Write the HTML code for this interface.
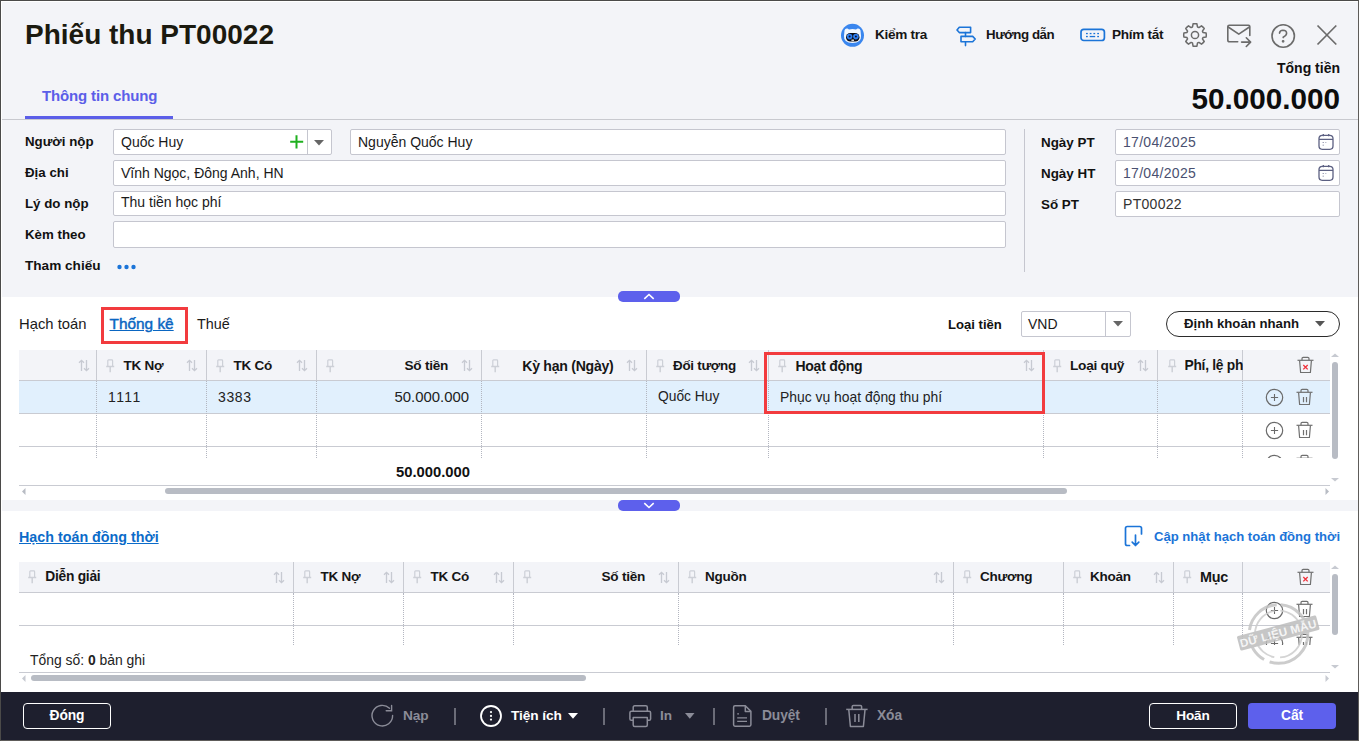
<!DOCTYPE html>
<html><head><meta charset="utf-8">
<style>
*{box-sizing:border-box;margin:0;padding:0}
html,body{width:1359px;height:741px;overflow:hidden}
body{position:relative;background:#f3f4f8;font-family:"Liberation Sans",sans-serif;color:#1a1a1a}
.a{position:absolute}
.frame{left:0;top:0;width:1359px;height:741px;border:1px solid #4b4a49;border-right-color:#5e5c5a;border-bottom-color:#5e5c5a;pointer-events:none;z-index:50}
.hl{left:1px;top:1px;width:1357px;height:1px;background:#fff;z-index:49}
.vl{left:1px;top:1px;width:1px;height:690px;background:#fff;z-index:49}
.lbl{font-weight:bold;font-size:13.3px;color:#111}
.inp{background:#fff;border:1px solid #c5c6cf;border-radius:2px;height:26px}
.itxt{font-size:14px;color:#1a1a1a}
.th{background:#f3f4f8}
.bold{font-weight:bold}
</style></head><body>
<div class="a frame"></div><div class="a hl"></div><div class="a vl"></div>

<!-- header -->
<div class="a bold" style="left:25px;top:19px;font-size:28px;color:#1b1a10;line-height:32px">Phiếu thu PT00022</div>
<div class="a bold" style="left:42px;top:86.5px;font-size:15px;letter-spacing:-0.15px;color:#5b5ee8;line-height:18px">Thông tin chung</div>
<div class="a" style="left:25px;top:116px;width:148px;height:3px;background:#5b5ee8"></div>
<div class="a" style="left:1px;top:119px;width:1357px;height:1px;background:#c8c9cf"></div>


<!-- header tools -->
<svg class="a" style="left:838px;top:21px" width="30" height="30" viewBox="0 0 30 30">
 <circle cx="14.5" cy="14.3" r="11.5" fill="#3a86ee"/>
 <path d="M6.5 9.5 Q7 7.2 9.5 7.6 L11 8.6 Q14.5 7.6 18 8.6 L19.5 7.6 Q22 7.2 22.5 9.5 L23 15 Q23.5 21.8 14.5 22 Q5.5 21.8 6 15 Z" fill="#f3f8ff"/>
 <rect x="8" y="12" width="13.5" height="8.6" rx="4.3" fill="#0d0d14"/>
 <circle cx="11.6" cy="15.6" r="2.8" fill="#2f7ff0"/><circle cx="17.9" cy="15.6" r="2.8" fill="#2f7ff0"/>
 <circle cx="11.6" cy="15.6" r="1" fill="#0d1030"/><circle cx="17.9" cy="15.6" r="1" fill="#0d1030"/>
 <rect x="13.4" y="18.6" width="2.6" height="1.2" fill="#fff"/>
</svg>
<div class="a bold" style="left:875px;top:27px;font-size:13.6px;letter-spacing:-0.3px;line-height:15px;color:#161616">Kiểm tra</div>
<svg class="a" style="left:950px;top:20px" width="32" height="32" viewBox="0 0 32 32" fill="none" stroke="#1b74d8" stroke-width="1.6" stroke-linejoin="round">
 <path d="M9.3 7.2 H20.6 V12.6 H9.3 L7 9.9 Z"/>
 <path d="M11 16.4 H22.7 L25.2 19 L22.7 21.7 H11 Z"/>
 <path d="M15.5 12.6 V16.4 M15.5 21.7 V25.6" stroke-linecap="round"/>
</svg>
<div class="a bold" style="left:986px;top:27px;font-size:13.3px;letter-spacing:-0.45px;line-height:15px;color:#161616">Hướng dẫn</div>
<svg class="a" style="left:1076px;top:20px" width="34" height="30" viewBox="0 0 34 30" fill="none">
 <rect x="5" y="9.3" width="23.4" height="11.2" rx="2.8" stroke="#1b74d8" stroke-width="1.7"/>
 <g fill="#1b74d8"><rect x="10" y="12.9" width="1.8" height="1.3"/><rect x="13.7" y="12.9" width="1.8" height="1.3"/><rect x="17.4" y="12.9" width="1.8" height="1.3"/><rect x="21.2" y="12.9" width="1.8" height="1.3"/>
 <rect x="10" y="15.9" width="1.8" height="1.3"/><rect x="13.7" y="15.9" width="5.5" height="1.3"/><rect x="21.2" y="15.9" width="1.8" height="1.3"/></g>
</svg>
<div class="a bold" style="left:1112px;top:27px;font-size:13.6px;letter-spacing:-0.3px;line-height:15px;color:#161616">Phím tắt</div>
<svg class="a" style="left:1178px;top:18px" width="34" height="34" viewBox="0 0 34 34" fill="none" stroke="#6b6b6b" stroke-width="1.5" stroke-linejoin="round">
 <path d="M14.52 8.98 L15.09 5.86 A11.3 11.3 0 0 1 18.91 5.86 L19.48 8.98 A8.4 8.4 0 0 1 20.92 9.57 L23.52 7.77 A11.3 11.3 0 0 1 26.23 10.48 L24.43 13.08 A8.4 8.4 0 0 1 25.02 14.52 L28.14 15.09 A11.3 11.3 0 0 1 28.14 18.91 L25.02 19.48 A8.4 8.4 0 0 1 24.43 20.92 L26.23 23.52 A11.3 11.3 0 0 1 23.52 26.23 L20.92 24.43 A8.4 8.4 0 0 1 19.48 25.02 L18.91 28.14 A11.3 11.3 0 0 1 15.09 28.14 L14.52 25.02 A8.4 8.4 0 0 1 13.08 24.43 L10.48 26.23 A11.3 11.3 0 0 1 7.77 23.52 L9.57 20.92 A8.4 8.4 0 0 1 8.98 19.48 L5.86 18.91 A11.3 11.3 0 0 1 5.86 15.09 L8.98 14.52 A8.4 8.4 0 0 1 9.57 13.08 L7.77 10.48 A11.3 11.3 0 0 1 10.48 7.77 L13.08 9.57 A8.4 8.4 0 0 1 14.52 8.98 Z"/>
 <circle cx="17" cy="17" r="3.6"/>
</svg>
<svg class="a" style="left:1222px;top:18px" width="34" height="34" viewBox="0 0 34 34" fill="none" stroke="#6b6b6b" stroke-width="1.6" stroke-linecap="round" stroke-linejoin="round">
 <path d="M15.7 23.8 H7.5 Q5.8 23.8 5.8 22 V8.7 Q5.8 7.3 7.3 7.3 H26.6 Q27.8 7.3 27.8 8.7 V17.5"/>
 <path d="M6.2 9 L16.8 16.2 L27.4 9"/>
 <path d="M19.6 24.1 H28.6 M24.3 19.8 L28.6 24.1 L24.3 28.5"/>
</svg>
<svg class="a" style="left:1266px;top:18px" width="34" height="34" viewBox="0 0 34 34" fill="none" stroke="#6b6b6b" stroke-width="1.6" stroke-linecap="round">
 <circle cx="17.2" cy="18" r="11.2"/>
 <path d="M13.5 15.2 Q13.8 12.2 16.9 12.2 Q20.6 12.3 20.6 15.3 Q20.6 17.5 17.2 19.2 V19.6"/>
 <circle cx="17.1" cy="23.3" r="0.6" fill="#6b6b6b"/>
</svg>
<svg class="a" style="left:1312px;top:20px" width="30" height="30" viewBox="0 0 30 30" fill="none" stroke="#6b6b6b" stroke-width="1.7">
 <path d="M5.5 5.5 L24.3 24.5 M24.3 5.5 L5.5 24.5"/>
</svg>
<div class="a bold" style="left:1277px;top:60px;font-size:14px;line-height:16px;color:#111;">Tổng tiền</div>
<div class="a bold" style="right:19px;top:84px;font-size:29.7px;line-height:30px;color:#0d0d0d">50.000.000</div>


<!-- form -->
<div class="a lbl" style="left:25px;top:134px">Người nộp</div>
<div class="a lbl" style="left:25px;top:165px">Địa chi</div>
<div class="a lbl" style="left:25px;top:196px">Lý do nộp</div>
<div class="a lbl" style="left:25px;top:227px">Kèm theo</div>
<div class="a lbl" style="left:25px;top:258px;font-size:13.6px">Tham chiếu</div>
<div class="a inp" style="left:113px;top:129px;width:219px"></div>
<div class="a" style="left:307px;top:130px;width:1px;height:24px;background:#c5c6cf"></div>
<svg class="a" style="left:288px;top:133px" width="17" height="17" viewBox="0 0 17 17"><path d="M8.5 2.2 V15.4 M2.2 8.8 H15.2" stroke="#1fb01f" stroke-width="2" fill="none"/></svg>
<svg class="a" style="left:313px;top:139px" width="12" height="8" viewBox="0 0 12 8"><path d="M1 1 H11 L6 6.5 Z" fill="#666"/></svg>
<div class="a itxt" style="left:121px;top:134px;line-height:16px">Quốc Huy</div>
<div class="a inp" style="left:350px;top:129px;width:656px"></div>
<div class="a itxt" style="left:358px;top:134px;line-height:16px">Nguyễn Quốc Huy</div>
<div class="a inp" style="left:113px;top:160px;width:893px"></div>
<div class="a itxt" style="left:121px;top:165px;line-height:16px">Vĩnh Ngọc, Đông Anh, HN</div>
<div class="a inp" style="left:113px;top:191px;width:893px;height:25px"></div>
<div class="a itxt" style="left:121px;top:194px;line-height:16px">Thu tiền học phí</div>
<div class="a inp" style="left:113px;top:221px;width:893px;height:27px"></div>
<svg class="a" style="left:116px;top:262px" width="22" height="10" viewBox="0 0 22 10"><g fill="#1b74d8"><circle cx="3.5" cy="5" r="2.2"/><circle cx="10.5" cy="5" r="2.2"/><circle cx="17.5" cy="5" r="2.2"/></g></svg>

<div class="a" style="left:1024px;top:129px;width:1px;height:143px;background:#c5c6cf"></div>
<div class="a lbl" style="left:1041px;top:135px;font-size:13.4px">Ngày PT</div>
<div class="a lbl" style="left:1041px;top:166px;font-size:13.4px">Ngày HT</div>
<div class="a lbl" style="left:1041px;top:197px;font-size:13.4px">Số PT</div>
<div class="a inp" style="left:1115px;top:129px;width:225px"></div>
<div class="a inp" style="left:1115px;top:160px;width:225px"></div>
<div class="a inp" style="left:1115px;top:191px;width:225px"></div>
<div class="a" style="left:1123px;top:134px;font-size:14px;line-height:16px;color:#4a5070;letter-spacing:0.3px">17/04/2025</div>
<div class="a" style="left:1123px;top:165px;font-size:14px;line-height:16px;color:#4a5070;letter-spacing:0.3px">17/04/2025</div>
<div class="a" style="left:1123px;top:196px;font-size:14px;line-height:16px;color:#333;letter-spacing:0.3px">PT00022</div>
<svg class="a" style="left:1316px;top:132px" width="20" height="20" viewBox="0 0 20 20" fill="none" stroke="#5c6082" stroke-width="1.3"><rect x="3" y="3.3" width="14" height="14" rx="3.2"/><path d="M3 7.3 H17 M7.3 2 V4.3 M12.7 2 V4.3"/><path d="M7.2 10.2 V10.9 M7.2 12.8 V13.4 M9.8 10.2 V10.8" stroke-width="1.1"/></svg>
<svg class="a" style="left:1316px;top:163px" width="20" height="20" viewBox="0 0 20 20" fill="none" stroke="#5c6082" stroke-width="1.3"><rect x="3" y="3.3" width="14" height="14" rx="3.2"/><path d="M3 7.3 H17 M7.3 2 V4.3 M12.7 2 V4.3"/><path d="M7.2 10.2 V10.9 M7.2 12.8 V13.4 M9.8 10.2 V10.8" stroke-width="1.1"/></svg>

<!-- collapse btn -->
<div class="a" style="left:618px;top:291px;width:62px;height:11px;border-radius:5px;background:#5d60ec;z-index:5"></div>
<svg class="a" style="left:643px;top:291px;z-index:6" width="12" height="11" viewBox="0 0 12 11"><path d="M1.3 7.8 L6 3.5 L10.7 7.8" stroke="#fff" stroke-width="1.6" fill="none"/></svg>

<!-- white panels -->
<div class="a" style="left:1px;top:297px;width:1357px;height:203px;background:#fff"></div>
<div class="a" style="left:1px;top:511px;width:1357px;height:181px;background:#fff"></div>
<!-- SEC1 -->
<div class="a" style="left:19px;top:316px;font-size:14.8px;line-height:17px;color:#1a1a1a">Hạch toán</div>
<div class="a" style="left:109.5px;top:315px;font-size:15.4px;line-height:17px;color:#0a66c2;text-decoration:underline;text-underline-offset:1px;-webkit-text-stroke:0.45px #0a66c2">Thống kê</div>
<div class="a" style="left:197px;top:316px;font-size:14.4px;line-height:17px;color:#1a1a1a">Thuế</div>
<div class="a" style="left:101px;top:307px;width:87px;height:37px;border:3px solid #f23b3e"></div>
<div class="a lbl" style="left:948px;top:317px;font-size:13.1px">Loại tiền</div>
<div class="a inp" style="left:1021px;top:311px;width:110px;height:26px"></div>
<div class="a" style="left:1105px;top:312px;width:1px;height:24px;background:#c5c6cf"></div>
<div class="a itxt" style="left:1028px;top:316px;line-height:16px">VND</div>
<svg class="a" style="left:1112px;top:320px" width="12" height="8" viewBox="0 0 12 8"><path d="M1 1 H11 L6 6.5 Z" fill="#666"/></svg>
<div class="a" style="left:1166px;top:311px;width:174px;height:26px;border:1px solid #2b2b2b;border-radius:13px;background:#fff"></div>
<div class="a bold" style="left:1184px;top:316px;font-size:13.2px;line-height:16px;color:#161616">Định khoản nhanh</div>
<svg class="a" style="left:1314px;top:320px" width="12" height="8" viewBox="0 0 12 8"><path d="M1 1 H11 L6 6.5 Z" fill="#555"/></svg>
<div class="a" style="left:19px;top:350px;width:1311px;height:30px;background:#f3f4f8"></div>
<div class="a" style="left:19px;top:380px;width:1311px;height:1px;background:#c9cbd2"></div>
<div class="a" style="left:19px;top:381px;width:1311px;height:32px;background:#e1f0fd"></div>
<div class="a" style="left:19px;top:413px;width:1311px;height:1px;background:#c9cbd2"></div>
<div class="a" style="left:19px;top:446px;width:1311px;height:1px;background:#c9cbd2"></div>
<div class="a" style="left:96px;top:350px;width:1px;height:30px;background:#c9cbd2"></div>
<div class="a" style="left:96px;top:381px;width:1px;height:77px;border-left:1px dotted #b3b6c0"></div>
<div class="a" style="left:206px;top:350px;width:1px;height:30px;background:#c9cbd2"></div>
<div class="a" style="left:206px;top:381px;width:1px;height:77px;border-left:1px dotted #b3b6c0"></div>
<div class="a" style="left:316px;top:350px;width:1px;height:30px;background:#c9cbd2"></div>
<div class="a" style="left:316px;top:381px;width:1px;height:77px;border-left:1px dotted #b3b6c0"></div>
<div class="a" style="left:481px;top:350px;width:1px;height:30px;background:#c9cbd2"></div>
<div class="a" style="left:481px;top:381px;width:1px;height:77px;border-left:1px dotted #b3b6c0"></div>
<div class="a" style="left:646px;top:350px;width:1px;height:30px;background:#c9cbd2"></div>
<div class="a" style="left:646px;top:381px;width:1px;height:77px;border-left:1px dotted #b3b6c0"></div>
<div class="a" style="left:768px;top:350px;width:1px;height:30px;background:#c9cbd2"></div>
<div class="a" style="left:768px;top:381px;width:1px;height:77px;border-left:1px dotted #b3b6c0"></div>
<div class="a" style="left:1043px;top:350px;width:1px;height:30px;background:#c9cbd2"></div>
<div class="a" style="left:1043px;top:381px;width:1px;height:77px;border-left:1px dotted #b3b6c0"></div>
<div class="a" style="left:1157px;top:350px;width:1px;height:30px;background:#c9cbd2"></div>
<div class="a" style="left:1157px;top:381px;width:1px;height:77px;border-left:1px dotted #b3b6c0"></div>
<div class="a" style="left:1242px;top:350px;width:1px;height:30px;background:#c9cbd2"></div>
<div class="a" style="left:1242px;top:381px;width:1px;height:77px;border-left:1px dotted #b3b6c0"></div>
<svg class="a" style="left:78px;top:359px" width="12" height="13" viewBox="0 0 12 13" fill="none" stroke="#c7cad2" stroke-width="1.3"><path d="M3.5 12 V1.3 M1 3.8 L3.5 1.3 L6 3.8 M8.5 1 V11.7 M6 9.2 L8.5 11.7 L11 9.2"/></svg>
<svg class="a" style="left:106px;top:359px" width="10" height="14" viewBox="0 0 10 14" fill="none" stroke="#cdd0d7" stroke-width="1.2"><path d="M1.8 7.6 V1.7 Q1.8 0.9 2.6 0.9 H5.8 Q6.6 0.9 6.6 1.7 V7.6"/><path d="M0.2 7.6 H8.2 M4.2 7.6 V13.2" stroke-width="1.5"/></svg>
<div class="a bold" style="left:123.5px;top:358px;font-size:13.5px;letter-spacing:-0.27px;line-height:16px;color:#161616;">TK Nợ</div>
<svg class="a" style="left:186px;top:359px" width="12" height="13" viewBox="0 0 12 13" fill="none" stroke="#c7cad2" stroke-width="1.3"><path d="M3.5 12 V1.3 M1 3.8 L3.5 1.3 L6 3.8 M8.5 1 V11.7 M6 9.2 L8.5 11.7 L11 9.2"/></svg>
<svg class="a" style="left:216px;top:359px" width="10" height="14" viewBox="0 0 10 14" fill="none" stroke="#cdd0d7" stroke-width="1.2"><path d="M1.8 7.6 V1.7 Q1.8 0.9 2.6 0.9 H5.8 Q6.6 0.9 6.6 1.7 V7.6"/><path d="M0.2 7.6 H8.2 M4.2 7.6 V13.2" stroke-width="1.5"/></svg>
<div class="a bold" style="left:233.5px;top:358px;font-size:13.5px;letter-spacing:-0.27px;line-height:16px;color:#161616;">TK Có</div>
<svg class="a" style="left:296px;top:359px" width="12" height="13" viewBox="0 0 12 13" fill="none" stroke="#c7cad2" stroke-width="1.3"><path d="M3.5 12 V1.3 M1 3.8 L3.5 1.3 L6 3.8 M8.5 1 V11.7 M6 9.2 L8.5 11.7 L11 9.2"/></svg>
<svg class="a" style="left:326px;top:359px" width="10" height="14" viewBox="0 0 10 14" fill="none" stroke="#cdd0d7" stroke-width="1.2"><path d="M1.8 7.6 V1.7 Q1.8 0.9 2.6 0.9 H5.8 Q6.6 0.9 6.6 1.7 V7.6"/><path d="M0.2 7.6 H8.2 M4.2 7.6 V13.2" stroke-width="1.5"/></svg>
<div class="a bold" style="left:248px;width:200px;text-align:right;top:358px;font-size:13.6px;letter-spacing:-0.27px;line-height:16px;color:#161616">Số tiền</div>
<svg class="a" style="left:461px;top:359px" width="12" height="13" viewBox="0 0 12 13" fill="none" stroke="#c7cad2" stroke-width="1.3"><path d="M3.5 12 V1.3 M1 3.8 L3.5 1.3 L6 3.8 M8.5 1 V11.7 M6 9.2 L8.5 11.7 L11 9.2"/></svg>
<svg class="a" style="left:491px;top:359px" width="10" height="14" viewBox="0 0 10 14" fill="none" stroke="#cdd0d7" stroke-width="1.2"><path d="M1.8 7.6 V1.7 Q1.8 0.9 2.6 0.9 H5.8 Q6.6 0.9 6.6 1.7 V7.6"/><path d="M0.2 7.6 H8.2 M4.2 7.6 V13.2" stroke-width="1.5"/></svg>
<div class="a bold" style="left:413.5px;width:200px;text-align:right;top:358px;font-size:14.1px;letter-spacing:-0.27px;line-height:16px;color:#161616">Kỳ hạn (Ngày)</div>
<svg class="a" style="left:626px;top:359px" width="12" height="13" viewBox="0 0 12 13" fill="none" stroke="#c7cad2" stroke-width="1.3"><path d="M3.5 12 V1.3 M1 3.8 L3.5 1.3 L6 3.8 M8.5 1 V11.7 M6 9.2 L8.5 11.7 L11 9.2"/></svg>
<svg class="a" style="left:656px;top:359px" width="10" height="14" viewBox="0 0 10 14" fill="none" stroke="#cdd0d7" stroke-width="1.2"><path d="M1.8 7.6 V1.7 Q1.8 0.9 2.6 0.9 H5.8 Q6.6 0.9 6.6 1.7 V7.6"/><path d="M0.2 7.6 H8.2 M4.2 7.6 V13.2" stroke-width="1.5"/></svg>
<div class="a bold" style="left:673px;top:358px;font-size:13.4px;letter-spacing:-0.27px;line-height:16px;color:#161616;">Đối tượng</div>
<svg class="a" style="left:748px;top:359px" width="12" height="13" viewBox="0 0 12 13" fill="none" stroke="#c7cad2" stroke-width="1.3"><path d="M3.5 12 V1.3 M1 3.8 L3.5 1.3 L6 3.8 M8.5 1 V11.7 M6 9.2 L8.5 11.7 L11 9.2"/></svg>
<svg class="a" style="left:778px;top:359px" width="10" height="14" viewBox="0 0 10 14" fill="none" stroke="#cdd0d7" stroke-width="1.2"><path d="M1.8 7.6 V1.7 Q1.8 0.9 2.6 0.9 H5.8 Q6.6 0.9 6.6 1.7 V7.6"/><path d="M0.2 7.6 H8.2 M4.2 7.6 V13.2" stroke-width="1.5"/></svg>
<div class="a bold" style="left:795.5px;top:358px;font-size:14.0px;letter-spacing:-0.27px;line-height:16px;color:#161616;">Hoạt động</div>
<svg class="a" style="left:1023px;top:359px" width="12" height="13" viewBox="0 0 12 13" fill="none" stroke="#c7cad2" stroke-width="1.3"><path d="M3.5 12 V1.3 M1 3.8 L3.5 1.3 L6 3.8 M8.5 1 V11.7 M6 9.2 L8.5 11.7 L11 9.2"/></svg>
<svg class="a" style="left:1053px;top:359px" width="10" height="14" viewBox="0 0 10 14" fill="none" stroke="#cdd0d7" stroke-width="1.2"><path d="M1.8 7.6 V1.7 Q1.8 0.9 2.6 0.9 H5.8 Q6.6 0.9 6.6 1.7 V7.6"/><path d="M0.2 7.6 H8.2 M4.2 7.6 V13.2" stroke-width="1.5"/></svg>
<div class="a bold" style="left:1070px;top:358px;font-size:13.7px;letter-spacing:-0.27px;line-height:16px;color:#161616;">Loại quỹ</div>
<svg class="a" style="left:1137px;top:359px" width="12" height="13" viewBox="0 0 12 13" fill="none" stroke="#c7cad2" stroke-width="1.3"><path d="M3.5 12 V1.3 M1 3.8 L3.5 1.3 L6 3.8 M8.5 1 V11.7 M6 9.2 L8.5 11.7 L11 9.2"/></svg>
<svg class="a" style="left:1168px;top:359px" width="10" height="14" viewBox="0 0 10 14" fill="none" stroke="#cdd0d7" stroke-width="1.2"><path d="M1.8 7.6 V1.7 Q1.8 0.9 2.6 0.9 H5.8 Q6.6 0.9 6.6 1.7 V7.6"/><path d="M0.2 7.6 H8.2 M4.2 7.6 V13.2" stroke-width="1.5"/></svg>
<div class="a bold" style="left:1184.5px;top:358px;font-size:13.8px;letter-spacing:-0.27px;line-height:16px;color:#161616;width:58px;overflow:hidden;white-space:nowrap;">Phí, lệ phí</div>
<div class="a" style="left:108px;top:389px;font-size:14px;line-height:16px;color:#222;letter-spacing:1.4px">1111</div>
<div class="a" style="left:218px;top:389px;font-size:14px;line-height:16px;color:#222;letter-spacing:0.6px">3383</div>
<div class="a" style="left:269px;width:200px;text-align:right;top:389px;font-size:14.9px;line-height:16px;color:#222">50.000.000</div>
<div class="a" style="left:658px;top:389px;font-size:13.8px;line-height:16px;color:#222">Quốc Huy</div>
<div class="a" style="left:780px;top:389px;font-size:13.9px;line-height:16px;color:#222">Phục vụ hoạt động thu phí</div>
<div class="a" style="left:764px;top:352px;width:281px;height:62px;border:3px solid #f23b3e;z-index:4"></div>
<svg class="a" style="left:1297px;top:356px" width="18" height="18" viewBox="0 0 18 18" fill="none" stroke="#707070" stroke-width="1.2"><path d="M0.5 4.3 H16.5"/><path d="M5 4.2 V2.4 Q5 1.3 6.2 1.3 H10.8 Q12 1.3 12 2.4 V4.2"/><path d="M2.6 4.6 L3.6 16.5 H13.4 L14.4 4.6"/><path d="M6.3 9 L10.7 13.4 M10.7 9 L6.3 13.4" stroke="#f0303a" stroke-width="1.3"/></svg>
<svg class="a" style="left:1264px;top:388px" width="20" height="20" viewBox="0 0 20 20" fill="none" stroke="#6a6a6a" stroke-width="1.2"><circle cx="10.5" cy="9.5" r="8.2"/><path d="M10.5 5.9 V13.1 M6.9 9.5 H14.1" stroke-width="1.1"/></svg>
<svg class="a" style="left:1296px;top:388px" width="18" height="18" viewBox="0 0 18 18" fill="none" stroke="#707070" stroke-width="1.2"><path d="M0.5 4.3 H16.5"/><path d="M5 4.2 V2.4 Q5 1.3 6.2 1.3 H10.8 Q12 1.3 12 2.4 V4.2"/><path d="M2.6 4.6 L3.6 16.5 H13.4 L14.4 4.6"/><path d="M7.5 9 V14.2 M10.5 9 V14.2"/></svg>
<svg class="a" style="left:1264px;top:421px" width="20" height="20" viewBox="0 0 20 20" fill="none" stroke="#6a6a6a" stroke-width="1.2"><circle cx="10.5" cy="9.5" r="8.2"/><path d="M10.5 5.9 V13.1 M6.9 9.5 H14.1" stroke-width="1.1"/></svg>
<svg class="a" style="left:1296px;top:421px" width="18" height="18" viewBox="0 0 18 18" fill="none" stroke="#707070" stroke-width="1.2"><path d="M0.5 4.3 H16.5"/><path d="M5 4.2 V2.4 Q5 1.3 6.2 1.3 H10.8 Q12 1.3 12 2.4 V4.2"/><path d="M2.6 4.6 L3.6 16.5 H13.4 L14.4 4.6"/><path d="M7.5 9 V14.2 M10.5 9 V14.2"/></svg>
<svg class="a" style="left:1264px;top:454px" width="20" height="20" viewBox="0 0 20 20" fill="none" stroke="#6a6a6a" stroke-width="1.2"><circle cx="10.5" cy="9.5" r="8.2"/><path d="M10.5 5.9 V13.1 M6.9 9.5 H14.1" stroke-width="1.1"/></svg>
<svg class="a" style="left:1296px;top:454px" width="18" height="18" viewBox="0 0 18 18" fill="none" stroke="#707070" stroke-width="1.2"><path d="M0.5 4.3 H16.5"/><path d="M5 4.2 V2.4 Q5 1.3 6.2 1.3 H10.8 Q12 1.3 12 2.4 V4.2"/><path d="M2.6 4.6 L3.6 16.5 H13.4 L14.4 4.6"/><path d="M7.5 9 V14.2 M10.5 9 V14.2"/></svg>
<div class="a" style="left:1250px;top:458px;width:80px;height:20px;background:#fff"></div>
<div class="a bold" style="left:270px;width:200px;text-align:right;top:464px;font-size:14.8px;line-height:16px;color:#111">50.000.000</div>
<div class="a" style="left:19px;top:485px;width:1311px;height:1px;background:#c9cbd2"></div>
<div class="a" style="left:165px;top:488px;width:902px;height:6px;border-radius:3px;background:#b8bcc4"></div>
<svg class="a" style="left:21px;top:487px" width="6" height="9" viewBox="0 0 6 9"><path d="M4.5 1 V8 L1 4.5 Z" fill="#b8bcc4"/></svg>
<svg class="a" style="left:1324px;top:487px" width="6" height="9" viewBox="0 0 6 9"><path d="M1.5 1 V8 L5 4.5 Z" fill="#b8bcc4"/></svg>
<div class="a" style="left:1332px;top:362px;width:6px;height:97px;border-radius:3px;background:#b8bcc4"></div>
<svg class="a" style="left:1330px;top:352px" width="10" height="6" viewBox="0 0 10 6"><path d="M1 5 H9 L5 1.5 Z" fill="#c7cad1"/></svg>
<svg class="a" style="left:1330px;top:477px" width="10" height="6" viewBox="0 0 10 6"><path d="M1 1 H9 L5 4.5 Z" fill="#c7cad1"/></svg>
<div class="a" style="left:1px;top:500px;width:1357px;height:11px;background:#f3f4f8"></div>
<div class="a" style="left:618px;top:500px;width:62px;height:11px;border-radius:5px;background:#5d60ec"></div>
<svg class="a" style="left:643px;top:500px" width="12" height="11" viewBox="0 0 12 11"><path d="M1.3 3.2 L6 7.5 L10.7 3.2" stroke="#fff" stroke-width="1.6" fill="none"/></svg>
<!-- /SEC1 -->
<!-- SEC2 -->
<div class="a" style="left:19px;top:529px;font-size:14.3px;line-height:17px;color:#0b6bc9;text-decoration:underline;text-underline-offset:1px;font-weight:bold">Hạch toán đồng thời</div>
<svg class="a" style="left:1122px;top:524px" width="24" height="24" viewBox="0 0 24 24" fill="none" stroke="#1b74d8" stroke-width="1.7" stroke-linecap="round" stroke-linejoin="round"><path d="M7.5 21.5 H5.3 Q3.5 21.5 3.5 19.7 V4.3 Q3.5 2.5 5.3 2.5 H17.7 Q19.5 2.5 19.5 4.3 V10"/><path d="M13.5 11 V21.5 M10.2 18.2 L13.5 21.5 L16.8 18.2"/></svg>
<div class="a bold" style="left:1154px;top:529px;font-size:13.1px;line-height:16px;color:#1b74d8">Cập nhật hạch toán đồng thời</div>
<div class="a" style="left:19px;top:562px;width:1311px;height:30px;background:#f3f4f8"></div>
<div class="a" style="left:19px;top:592px;width:1311px;height:1px;background:#c9cbd2"></div>
<div class="a" style="left:19px;top:625px;width:1311px;height:1px;background:#c9cbd2"></div>
<div class="a" style="left:293px;top:562px;width:1px;height:30px;background:#c9cbd2"></div>
<div class="a" style="left:293px;top:593px;width:1px;height:52px;border-left:1px dotted #b3b6c0"></div>
<div class="a" style="left:403px;top:562px;width:1px;height:30px;background:#c9cbd2"></div>
<div class="a" style="left:403px;top:593px;width:1px;height:52px;border-left:1px dotted #b3b6c0"></div>
<div class="a" style="left:513px;top:562px;width:1px;height:30px;background:#c9cbd2"></div>
<div class="a" style="left:513px;top:593px;width:1px;height:52px;border-left:1px dotted #b3b6c0"></div>
<div class="a" style="left:678px;top:562px;width:1px;height:30px;background:#c9cbd2"></div>
<div class="a" style="left:678px;top:593px;width:1px;height:52px;border-left:1px dotted #b3b6c0"></div>
<div class="a" style="left:953px;top:562px;width:1px;height:30px;background:#c9cbd2"></div>
<div class="a" style="left:953px;top:593px;width:1px;height:52px;border-left:1px dotted #b3b6c0"></div>
<div class="a" style="left:1063px;top:562px;width:1px;height:30px;background:#c9cbd2"></div>
<div class="a" style="left:1063px;top:593px;width:1px;height:52px;border-left:1px dotted #b3b6c0"></div>
<div class="a" style="left:1173px;top:562px;width:1px;height:30px;background:#c9cbd2"></div>
<div class="a" style="left:1173px;top:593px;width:1px;height:52px;border-left:1px dotted #b3b6c0"></div>
<div class="a" style="left:1242px;top:562px;width:1px;height:30px;background:#c9cbd2"></div>
<div class="a" style="left:1242px;top:593px;width:1px;height:52px;border-left:1px dotted #b3b6c0"></div>
<svg class="a" style="left:28px;top:570px" width="10" height="14" viewBox="0 0 10 14" fill="none" stroke="#cdd0d7" stroke-width="1.2"><path d="M1.8 7.6 V1.7 Q1.8 0.9 2.6 0.9 H5.8 Q6.6 0.9 6.6 1.7 V7.6"/><path d="M0.2 7.6 H8.2 M4.2 7.6 V13.2" stroke-width="1.5"/></svg>
<div class="a bold" style="left:45.3px;top:569px;font-size:13.8px;letter-spacing:-0.27px;line-height:16px;color:#161616">Diễn giải</div>
<svg class="a" style="left:273px;top:571px" width="12" height="13" viewBox="0 0 12 13" fill="none" stroke="#c7cad2" stroke-width="1.3"><path d="M3.5 12 V1.3 M1 3.8 L3.5 1.3 L6 3.8 M8.5 1 V11.7 M6 9.2 L8.5 11.7 L11 9.2"/></svg>
<svg class="a" style="left:303px;top:570px" width="10" height="14" viewBox="0 0 10 14" fill="none" stroke="#cdd0d7" stroke-width="1.2"><path d="M1.8 7.6 V1.7 Q1.8 0.9 2.6 0.9 H5.8 Q6.6 0.9 6.6 1.7 V7.6"/><path d="M0.2 7.6 H8.2 M4.2 7.6 V13.2" stroke-width="1.5"/></svg>
<div class="a bold" style="left:320.5px;top:569px;font-size:13.5px;letter-spacing:-0.27px;line-height:16px;color:#161616">TK Nợ</div>
<svg class="a" style="left:383px;top:571px" width="12" height="13" viewBox="0 0 12 13" fill="none" stroke="#c7cad2" stroke-width="1.3"><path d="M3.5 12 V1.3 M1 3.8 L3.5 1.3 L6 3.8 M8.5 1 V11.7 M6 9.2 L8.5 11.7 L11 9.2"/></svg>
<svg class="a" style="left:413px;top:570px" width="10" height="14" viewBox="0 0 10 14" fill="none" stroke="#cdd0d7" stroke-width="1.2"><path d="M1.8 7.6 V1.7 Q1.8 0.9 2.6 0.9 H5.8 Q6.6 0.9 6.6 1.7 V7.6"/><path d="M0.2 7.6 H8.2 M4.2 7.6 V13.2" stroke-width="1.5"/></svg>
<div class="a bold" style="left:430.5px;top:569px;font-size:13.5px;letter-spacing:-0.27px;line-height:16px;color:#161616">TK Có</div>
<svg class="a" style="left:493px;top:571px" width="12" height="13" viewBox="0 0 12 13" fill="none" stroke="#c7cad2" stroke-width="1.3"><path d="M3.5 12 V1.3 M1 3.8 L3.5 1.3 L6 3.8 M8.5 1 V11.7 M6 9.2 L8.5 11.7 L11 9.2"/></svg>
<svg class="a" style="left:523px;top:570px" width="10" height="14" viewBox="0 0 10 14" fill="none" stroke="#cdd0d7" stroke-width="1.2"><path d="M1.8 7.6 V1.7 Q1.8 0.9 2.6 0.9 H5.8 Q6.6 0.9 6.6 1.7 V7.6"/><path d="M0.2 7.6 H8.2 M4.2 7.6 V13.2" stroke-width="1.5"/></svg>
<div class="a bold" style="left:445px;width:200px;text-align:right;top:569px;font-size:13.6px;letter-spacing:-0.27px;line-height:16px;color:#161616">Số tiền</div>
<svg class="a" style="left:658px;top:571px" width="12" height="13" viewBox="0 0 12 13" fill="none" stroke="#c7cad2" stroke-width="1.3"><path d="M3.5 12 V1.3 M1 3.8 L3.5 1.3 L6 3.8 M8.5 1 V11.7 M6 9.2 L8.5 11.7 L11 9.2"/></svg>
<svg class="a" style="left:688px;top:570px" width="10" height="14" viewBox="0 0 10 14" fill="none" stroke="#cdd0d7" stroke-width="1.2"><path d="M1.8 7.6 V1.7 Q1.8 0.9 2.6 0.9 H5.8 Q6.6 0.9 6.6 1.7 V7.6"/><path d="M0.2 7.6 H8.2 M4.2 7.6 V13.2" stroke-width="1.5"/></svg>
<div class="a bold" style="left:705px;top:569px;font-size:13.5px;letter-spacing:-0.27px;line-height:16px;color:#161616">Nguồn</div>
<svg class="a" style="left:933px;top:571px" width="12" height="13" viewBox="0 0 12 13" fill="none" stroke="#c7cad2" stroke-width="1.3"><path d="M3.5 12 V1.3 M1 3.8 L3.5 1.3 L6 3.8 M8.5 1 V11.7 M6 9.2 L8.5 11.7 L11 9.2"/></svg>
<svg class="a" style="left:963px;top:570px" width="10" height="14" viewBox="0 0 10 14" fill="none" stroke="#cdd0d7" stroke-width="1.2"><path d="M1.8 7.6 V1.7 Q1.8 0.9 2.6 0.9 H5.8 Q6.6 0.9 6.6 1.7 V7.6"/><path d="M0.2 7.6 H8.2 M4.2 7.6 V13.2" stroke-width="1.5"/></svg>
<div class="a bold" style="left:980px;top:569px;font-size:13.5px;letter-spacing:-0.27px;line-height:16px;color:#161616">Chương</div>
<svg class="a" style="left:1073px;top:570px" width="10" height="14" viewBox="0 0 10 14" fill="none" stroke="#cdd0d7" stroke-width="1.2"><path d="M1.8 7.6 V1.7 Q1.8 0.9 2.6 0.9 H5.8 Q6.6 0.9 6.6 1.7 V7.6"/><path d="M0.2 7.6 H8.2 M4.2 7.6 V13.2" stroke-width="1.5"/></svg>
<div class="a bold" style="left:1090px;top:569px;font-size:13.5px;letter-spacing:-0.27px;line-height:16px;color:#161616">Khoản</div>
<svg class="a" style="left:1153px;top:571px" width="12" height="13" viewBox="0 0 12 13" fill="none" stroke="#c7cad2" stroke-width="1.3"><path d="M3.5 12 V1.3 M1 3.8 L3.5 1.3 L6 3.8 M8.5 1 V11.7 M6 9.2 L8.5 11.7 L11 9.2"/></svg>
<svg class="a" style="left:1183px;top:570px" width="10" height="14" viewBox="0 0 10 14" fill="none" stroke="#cdd0d7" stroke-width="1.2"><path d="M1.8 7.6 V1.7 Q1.8 0.9 2.6 0.9 H5.8 Q6.6 0.9 6.6 1.7 V7.6"/><path d="M0.2 7.6 H8.2 M4.2 7.6 V13.2" stroke-width="1.5"/></svg>
<div class="a bold" style="left:1200px;top:569px;font-size:14.4px;letter-spacing:-0.27px;line-height:16px;color:#161616">Mục</div>
<svg class="a" style="left:1297px;top:568px" width="18" height="18" viewBox="0 0 18 18" fill="none" stroke="#707070" stroke-width="1.2"><path d="M0.5 4.3 H16.5"/><path d="M5 4.2 V2.4 Q5 1.3 6.2 1.3 H10.8 Q12 1.3 12 2.4 V4.2"/><path d="M2.6 4.6 L3.6 16.5 H13.4 L14.4 4.6"/><path d="M6.3 9 L10.7 13.4 M10.7 9 L6.3 13.4" stroke="#f0303a" stroke-width="1.3"/></svg>
<svg class="a" style="left:1264px;top:601px" width="20" height="20" viewBox="0 0 20 20" fill="none" stroke="#6a6a6a" stroke-width="1.2"><circle cx="10.5" cy="9.5" r="8.2"/><path d="M10.5 5.9 V13.1 M6.9 9.5 H14.1" stroke-width="1.1"/></svg>
<svg class="a" style="left:1296px;top:600px" width="18" height="18" viewBox="0 0 18 18" fill="none" stroke="#707070" stroke-width="1.2"><path d="M0.5 4.3 H16.5"/><path d="M5 4.2 V2.4 Q5 1.3 6.2 1.3 H10.8 Q12 1.3 12 2.4 V4.2"/><path d="M2.6 4.6 L3.6 16.5 H13.4 L14.4 4.6"/><path d="M7.5 9 V14.2 M10.5 9 V14.2"/></svg>
<svg class="a" style="left:1264px;top:634px" width="20" height="20" viewBox="0 0 20 20" fill="none" stroke="#6a6a6a" stroke-width="1.2"><circle cx="10.5" cy="9.5" r="8.2"/><path d="M10.5 5.9 V13.1 M6.9 9.5 H14.1" stroke-width="1.1"/></svg>
<svg class="a" style="left:1296px;top:633px" width="18" height="18" viewBox="0 0 18 18" fill="none" stroke="#707070" stroke-width="1.2"><path d="M0.5 4.3 H16.5"/><path d="M5 4.2 V2.4 Q5 1.3 6.2 1.3 H10.8 Q12 1.3 12 2.4 V4.2"/><path d="M2.6 4.6 L3.6 16.5 H13.4 L14.4 4.6"/><path d="M7.5 9 V14.2 M10.5 9 V14.2"/></svg>
<div class="a" style="left:1250px;top:645px;width:80px;height:25px;background:#fff"></div>
<div class="a" style="left:30px;top:652px;font-size:13.9px;line-height:16px;color:#222">Tổng số: <b>0</b> bản ghi</div>
<div class="a" style="left:19px;top:672px;width:1311px;height:1px;background:#c9cbd2"></div>
<div class="a" style="left:31px;top:675px;width:555px;height:6px;border-radius:3px;background:#b8bcc4"></div>
<svg class="a" style="left:21px;top:674px" width="6" height="9" viewBox="0 0 6 9"><path d="M4.5 1 V8 L1 4.5 Z" fill="#c7cad1"/></svg>
<svg class="a" style="left:1324px;top:674px" width="6" height="9" viewBox="0 0 6 9"><path d="M1.5 1 V8 L5 4.5 Z" fill="#c7cad1"/></svg>
<div class="a" style="left:1332px;top:574px;width:6px;height:61px;border-radius:3px;background:#b8bcc4"></div>
<svg class="a" style="left:1330px;top:564px" width="10" height="6" viewBox="0 0 10 6"><path d="M1 5 H9 L5 1.5 Z" fill="#c7cad1"/></svg>
<svg class="a" style="left:1330px;top:664px" width="10" height="6" viewBox="0 0 10 6"><path d="M1 1 H9 L5 4.5 Z" fill="#c7cad1"/></svg>
<svg class="a" style="left:1236px;top:592px;z-index:8;opacity:0.85" width="86" height="84" viewBox="0 0 86 84"><g transform="translate(42.5,42)"><circle r="29.3" fill="none" stroke="#c4c4c4" stroke-width="3" stroke-dasharray="55 6 30 5 40 4"/><circle r="23.5" fill="none" stroke="#cdcdcd" stroke-width="1.8" stroke-dasharray="35 6 25 5"/><g transform="rotate(-15) translate(0,-1)"><rect x="-41" y="-7.5" width="82" height="15" rx="1.5" fill="#bdbdbd"/><text x="0" y="4.3" text-anchor="middle" font-family="Liberation Sans" font-weight="bold" font-size="11.5" fill="#f4f4f4" letter-spacing="0.2">DỮ LIỆU MẪU</text></g></g></svg>
<!-- /SEC2 -->
<!-- footer -->
<div class="a" style="left:1px;top:692px;width:1357px;height:48px;background:#1e1f2e"></div>

<!-- FOOT -->
<div class="a" style="left:23px;top:703px;width:88px;height:26px;border:1px solid #fff;border-radius:4px"></div>
<div class="a bold" style="left:23px;width:88px;text-align:center;top:708px;font-size:13.8px;letter-spacing:-0.1px;line-height:16px;color:#fff">Đóng</div>
<svg class="a" style="left:370px;top:703px" width="26" height="26" viewBox="0 0 26 26" fill="none" stroke="#8b8c98" stroke-width="1.4" stroke-linecap="round"><path d="M22.6 12.5 A10.3 10.3 0 1 1 19.5 5.3"/><path d="M21.6 2.4 V7.7 H16.2" /></svg>
<div class="a bold" style="left:403px;top:708px;font-size:13.7px;letter-spacing:-0.1px;line-height:16px;color:#8b8c98">Nạp</div>
<div class="a" style="left:454px;top:708px;width:2px;height:17px;background:#6b6c78"></div>
<svg class="a" style="left:478px;top:703px" width="26" height="26" viewBox="0 0 26 26" fill="none" stroke="#fff" stroke-width="1.8"><circle cx="13" cy="13" r="10"/><g fill="#fff" stroke="none"><circle cx="13" cy="9.1" r="1.1"/><circle cx="13" cy="12.9" r="1.1"/><circle cx="13" cy="16.6" r="1.1"/></g></svg>
<div class="a bold" style="left:511px;top:708px;font-size:13.7px;letter-spacing:-0.1px;line-height:16px;color:#fff">Tiện ích</div>
<svg class="a" style="left:567px;top:712px" width="12" height="8" viewBox="0 0 12 8"><path d="M1 1 H11 L6 6.8 Z" fill="#fff"/></svg>
<div class="a" style="left:603px;top:708px;width:2px;height:17px;background:#6b6c78"></div>
<svg class="a" style="left:627px;top:703px" width="26" height="26" viewBox="0 0 26 26" fill="none" stroke="#8b8c98" stroke-width="1.5" stroke-linejoin="round"><path d="M6.2 8.2 V4.3 Q6.2 2.8 7.7 2.8 H18.8 Q20.3 2.8 20.3 4.3 V8.2"/><path d="M6.2 17.3 H4.3 Q2.9 17.3 2.9 15.9 V9.7 Q2.9 8.2 4.4 8.2 H22.1 Q23.6 8.2 23.6 9.7 V15.9 Q23.6 17.3 22.2 17.3 H20.3"/><path d="M6.2 14.5 H20.3 V21.9 Q20.3 23.4 18.8 23.4 H7.7 Q6.2 23.4 6.2 21.9 Z"/></svg>
<div class="a bold" style="left:660px;top:708px;font-size:13.6px;letter-spacing:-0.1px;line-height:16px;color:#8b8c98">In</div>
<svg class="a" style="left:684px;top:712px" width="12" height="8" viewBox="0 0 12 8"><path d="M1 1 H10.5 L5.8 6.8 Z" fill="#8b8c98"/></svg>
<div class="a" style="left:713px;top:708px;width:2px;height:17px;background:#6b6c78"></div>
<svg class="a" style="left:730px;top:703px" width="26" height="26" viewBox="0 0 26 26" fill="none" stroke="#8b8c98" stroke-width="1.5" stroke-linejoin="round"><path d="M15.3 2.8 H5 Q3.6 2.8 3.6 4.2 V21.8 Q3.6 23.2 5 23.2 H19.5 Q20.9 23.2 20.9 21.8 V8.4 Z"/><path d="M15.3 2.8 V8.4 H20.9"/><path d="M7.2 10.8 H9 M7.2 14.8 H17 M7.2 18.4 H17" stroke-width="1.2"/></svg>
<div class="a bold" style="left:762px;top:708px;font-size:13.8px;letter-spacing:-0.1px;line-height:16px;color:#8b8c98">Duyệt</div>
<div class="a" style="left:825px;top:708px;width:2px;height:17px;background:#6b6c78"></div>
<svg class="a" style="left:844px;top:703px" width="26" height="26" viewBox="0 0 26 26" fill="none" stroke="#8b8c98" stroke-width="1.5" stroke-linejoin="round"><path d="M2.2 6.4 H23.6"/><path d="M8.2 6.2 V3.6 Q8.2 2.4 9.4 2.4 H16.4 Q17.6 2.4 17.6 3.6 V6.2"/><path d="M4.8 6.8 L6.4 23.5 H19.4 L21 6.8"/><path d="M11 11 V19 M14.8 11 V19"/></svg>
<div class="a bold" style="left:877px;top:708px;font-size:13.8px;letter-spacing:-0.1px;line-height:16px;color:#8b8c98">Xóa</div>
<div class="a" style="left:1149px;top:703px;width:88px;height:26px;border:1px solid #fff;border-radius:4px"></div>
<div class="a bold" style="left:1149px;width:88px;text-align:center;top:708px;font-size:13.6px;letter-spacing:-0.1px;line-height:16px;color:#fff">Hoãn</div>
<div class="a" style="left:1248px;top:703px;width:88px;height:26px;background:#5d60ec;border-radius:4px"></div>
<div class="a bold" style="left:1248px;width:88px;text-align:center;top:708px;font-size:13.8px;letter-spacing:-0.1px;line-height:16px;color:#fff">Cất</div>
<!-- /FOOT -->
</body></html>
